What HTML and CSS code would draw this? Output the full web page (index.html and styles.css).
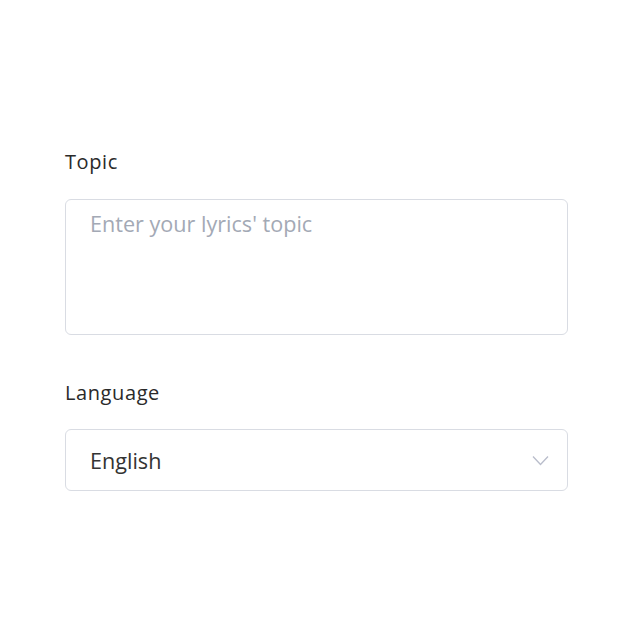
FILE: index.html
```html
<!doctype html>
<html lang="en-us">
  <head>
    <meta charset="utf-8">
    <title>Lyrics</title>
    <link rel="stylesheet" href="styles.css">
  </head>
  <body>
    <div class="form">
      <label class="label" for="topic">Topic</label>
      <textarea class="topic" id="topic" placeholder="Enter your lyrics' topic"></textarea>

      <label class="label" for="language">Language</label>
      <div class="select">
        <span class="value" id="language">English</span>
        <svg class="chevron" width="17" height="11" viewBox="0 0 17 11">
          <path d="M1 1.5 L8.5 9.5 L16 1.5" fill="none" stroke="#b9bdcb" stroke-width="1.3"/>
        </svg>
      </div>
    </div>
  </body>
</html>
```

FILE: styles.css
```css
html, body {
  height: 100%;
}

body {
  margin: 0;
  background: #fff;
  font-family: "Open Sans", "Liberation Sans", sans-serif;
  color: #2b2b2b;
}

.form {
  display: flex;
  flex-direction: column;
  width: 503px;
  padding: 148px 0 0 65px;
}

.label {
  font-size: 20px;
  letter-spacing: 0.6px;
  line-height: 28px;
  color: #2a2a2a;
}

.topic {
  box-sizing: border-box;
  margin: 23px 0 44px;
  height: 136px;
  padding: 8px 24px;
  border: 1.5px solid #d9dce3;
  border-radius: 6px;
  font-family: inherit;
  font-size: 21.6px;
  line-height: 32px;
  resize: none;
  outline: none;
}

.topic::placeholder {
  color: #a3a9b5;
}

.select {
  box-sizing: border-box;
  display: flex;
  align-items: center;
  justify-content: space-between;
  margin-top: 22px;
  height: 62px;
  padding: 0 18px 0 24px;
  border: 1.5px solid #d9dce3;
  border-radius: 6px;
}

.value {
  font-size: 21.6px;
  color: #333;
}
```
